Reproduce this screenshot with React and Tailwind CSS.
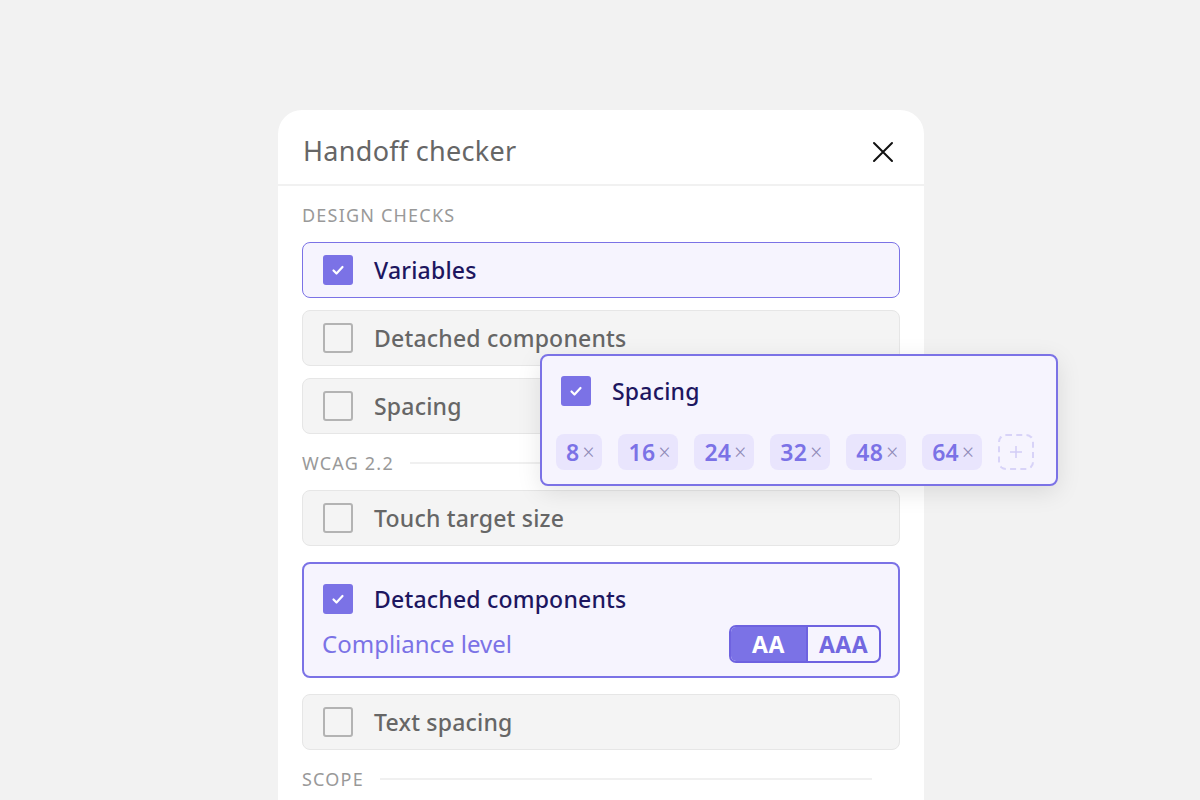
import React from "react";

const FONT = { fontFamily: '"Noto Sans", "Open Sans", sans-serif' };

function Check({ on }) {
  if (on) {
    return (
      <span className="flex h-[30px] w-[30px] shrink-0 items-center justify-center rounded-[3px] bg-[#7b72e6]">
        <svg width="16" height="16" viewBox="0 0 16 16" fill="none">
          <path d="M3.5 8.5l3 3 6-6.5" stroke="white" strokeWidth="2.2" strokeLinecap="round" strokeLinejoin="round" />
        </svg>
      </span>
    );
  }
  return <span className="h-[30px] w-[30px] shrink-0 rounded-[3px] border-2 border-[#b3b3b3] bg-[#f4f4f4]" />;
}

function Row({ label, on }) {
  return (
    <div
      className={
        "flex h-[56px] items-center gap-[21px] rounded-[8px] border px-[20px] " +
        (on ? "border-[#7b72e6] bg-[#f6f4fe]" : "border-[#e6e6e6] bg-[#f4f4f4]")
      }
    >
      <Check on={on} />
      <span className={"text-[23px] font-medium leading-[30px] tracking-[0.2px] " + (on ? "text-[#1d1660]" : "text-[#666666]")}>{label}</span>
    </div>
  );
}

function Section({ label, line }) {
  return (
    <div className="mb-[15px] mt-[17px] flex h-[24px] items-center gap-[16px] pr-[28px]">
      <span className="text-[18px] uppercase leading-[24px] tracking-[1.2px] text-[#999999]">{label}</span>
      {line && <span className="h-[2px] flex-1 bg-[#f0f0f0]" />}
    </div>
  );
}

function Chip({ n }) {
  return (
    <span className="flex h-[36px] items-center gap-[3px] rounded-[8px] bg-[#e9e5fd] pl-[10px] pr-[8px]">
      <span className="text-[23px] font-semibold leading-[30px] tracking-[0.3px] text-[#7b72e6]">{n}</span>
      <span className="text-[21px] font-light leading-none text-[#8f8ab8]">×</span>
    </span>
  );
}

export default function App() {
  return (
    <div className="relative h-[800px] w-[1200px] overflow-hidden bg-[#f2f2f2]" style={FONT}>
      <div className="ml-[278px] mt-[110px] h-[720px] w-[646px] rounded-t-[24px] bg-white">
        <div className="flex h-[76px] items-center justify-between border-b-2 border-[#f1f1f1] pl-[25px] pr-[30px] pt-[9px]">
          <span className="text-[27px] tracking-[0.3px] text-[#666666]">Handoff checker</span>
          <svg width="22" height="22" viewBox="0 0 22 22" fill="none">
            <path d="M2 2l18 18M20 2L2 20" stroke="#111" strokeWidth="2" strokeLinecap="round" />
          </svg>
        </div>
        <div className="px-[24px]">
          <Section label="Design checks" />
          <div className="flex flex-col gap-[12px]">
            <Row label="Variables" on />
            <Row label="Detached components" />
            <Row label="Spacing" />
          </div>
          <Section label="WCAG 2.2" line />
          <div className="flex flex-col gap-[16px]">
            <Row label="Touch target size" />
            <div className="flex flex-col gap-[11px] rounded-[8px] border-2 border-[#7b72e6] bg-[#f6f4fe] pb-[13px] pl-[18px] pr-[17px] pt-[20px]">
              <div className="flex h-[30px] items-center gap-[21px] pl-[1px]">
                <Check on />
                <span className="text-[23px] font-medium leading-[30px] tracking-[0.2px] text-[#1d1660]">Detached components</span>
              </div>
              <div className="flex h-[38px] items-center justify-between">
                <span className="text-[24px] leading-[30px] text-[#7b72e6]">Compliance level</span>
                <div className="flex h-[38px] overflow-hidden rounded-[7px] border-2 border-[#6e62e0]">
                  <span className="flex w-[75px] items-center justify-center bg-[#7b72e6] text-[23px] font-bold leading-none tracking-[0.5px] text-white">AA</span>
                  <span className="flex w-[73px] items-center justify-center border-l-2 border-[#6e62e0] text-[23px] font-bold leading-none tracking-[0.5px] text-[#7268e0]">AAA</span>
                </div>
              </div>
            </div>
            <Row label="Text spacing" />
          </div>
          <Section label="Scope" line />
        </div>
      </div>

      <div className="absolute left-[540px] top-[354px] w-[518px] rounded-[8px] border-2 border-[#7b72e6] bg-[#f6f4fe] pb-[14px] pl-[14px] pt-[20px] shadow-[0_6px_24px_rgba(0,0,0,0.10)]">
        <div className="flex h-[30px] items-center gap-[21px] pl-[5px]">
          <Check on />
          <span className="text-[23px] font-medium leading-[30px] tracking-[0.2px] text-[#1d1660]">Spacing</span>
        </div>
        <div className="mt-[28px] flex items-center gap-[16px]">
          {[8, 16, 24, 32, 48, 64].map((n) => (
            <Chip key={n} n={n} />
          ))}
          <span className="flex h-[36px] w-[36px] items-center justify-center rounded-[8px] border-2 border-dashed border-[#d8d3f8]">
            <svg width="16" height="16" viewBox="0 0 16 16" fill="none">
              <path d="M8 2v12M2 8h12" stroke="#d2ccf6" strokeWidth="1.5" />
            </svg>
          </span>
        </div>
      </div>
    </div>
  );
}
